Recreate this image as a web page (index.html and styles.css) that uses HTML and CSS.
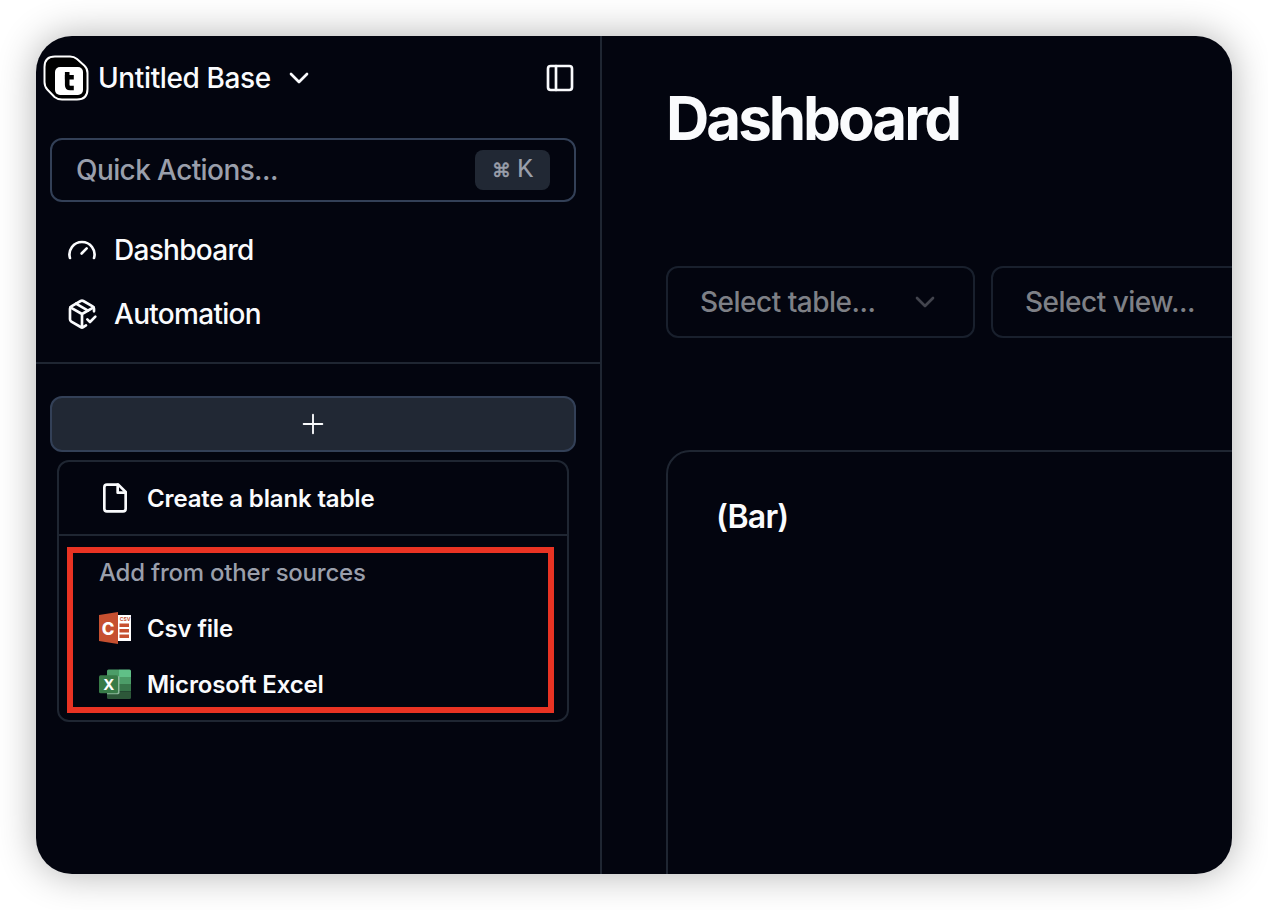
FILE: index.html
```html
<!DOCTYPE html>
<html lang="en">
<head>
<meta charset="utf-8">
<title>Untitled Base</title>
<link rel="stylesheet" href="styles.css">
</head>
<body>
<div class="window">
  <aside class="sidebar">
    <header class="base-header">
      <svg class="logo" viewBox="0 0 46 46">
        <path d="M12 1.500H27Q31 1.500 34 4L41.500 10.700Q44.500 13.500 44.500 18V34Q44.500 44.500 34 44.500H19Q14.500 44.500 11.500 42L4.300 34.500Q1.500 31.500 1.500 27V12Q1.500 1.500 12 1.500Z" fill="#000" stroke="#fff" stroke-width="2"/>
        <rect x="12" y="12" width="28" height="28" rx="5" fill="#fff"/>
        <path d="M24.200 17V30Q24.200 33 27.200 33H30.800M21.800 22.300H30.800" fill="none" stroke="#000" stroke-width="4.600"/>
      </svg>
      <span class="base-name">Untitled Base</span>
      <svg class="icon chevron" viewBox="0 0 24 24"><path d="m6 9 6 6 6-6"/></svg>
      <svg class="icon panel" viewBox="0 0 24 24"><rect x="3" y="3" width="18" height="18" rx="2"/><path d="M9 3v18"/></svg>
    </header>
    <button class="quick"><span class="t-quick">Quick Actions...</span><kbd><span class="cmd">⌘</span><span>K</span></kbd></button>
    <nav class="nav">
      <a class="nav-item"><svg class="icon" viewBox="0 0 24 24"><path d="m11.700 14.600 3.800-3.800"/><path d="M2.970 18a9.400 9.400 0 1 1 18.060 0"/></svg><span class="t-nav">Dashboard</span></a>
      <a class="nav-item"><svg class="icon" viewBox="0 0 24 24"><path d="m16 16 2 2 4-4"/><path d="M21 10V8a2 2 0 0 0-1-1.730l-7-4a2 2 0 0 0-2 0l-7 4A2 2 0 0 0 3 8v8a2 2 0 0 0 1 1.730l7 4a2 2 0 0 0 2 0l2-1.140"/><path d="m7.500 4.270 9 5.150"/><path d="M3.290 7 12 12l8.710-5M12 22V12"/></svg><span class="t-nav">Automation</span></a>
    </nav>
    <div class="tables">
      <button class="add"><svg class="icon" viewBox="0 0 24 24"><path d="M5 12h14M12 5v14"/></svg></button>
      <div class="menu">
        <div class="menu-item blank">
          <svg class="icon" viewBox="0 0 24 24"><path d="M14.500 2H6a2 2 0 0 0-2 2v16a2 2 0 0 0 2 2h12a2 2 0 0 0 2-2V7.500L14.500 2z"/><path d="M14 2v6h6"/></svg>
          <span class="item-text">Create a blank table</span>
        </div>
        <div class="sources">
          <div class="menu-label">Add from other sources</div>
          <div class="menu-item">
            <svg class="file-icon" viewBox="0 0 32 32">
              <rect x="17" y="3" width="15" height="26" fill="#fff"/>
              <path d="M0 3 19 0V32L0 29Z" fill="#c65030"/>
              <path d="M20.500 11.500H30V15H20.500ZM20.500 17H30V20.500H20.500ZM20.500 22.500H30V26H20.500Z" fill="#c65030"/>
              <text x="20.700" y="8.900" class="csv-mini">CSV</text>
              <text x="2.800" y="23" class="csv-letter">C</text>
            </svg>
            <span class="item-text">Csv file</span>
          </div>
          <div class="menu-item">
            <svg class="file-icon" viewBox="0 0 32 32">
              <path d="M8 3Q8 1.500 9.500 1.500H20V9H8Z" fill="#4c9d68"/>
              <path d="M20 1.500H30.500Q32 1.500 32 3V9H20Z" fill="#60c087"/>
              <path d="M8 9H20V16H8Z" fill="#37764a"/>
              <path d="M20 9H32V16H20Z" fill="#4c9d68"/>
              <path d="M8 16H20V24H8Z" fill="#2d5739"/>
              <path d="M20 16H32V23.500H20Z" fill="#37764a"/>
              <path d="M8 23.500H32V29.500Q32 31 30.500 31H9.500Q8 31 8 29.500Z" fill="#2d5739"/>
              <path d="M8 8H19Q20.500 8 20.500 9.500V24.500Q20.500 26.300 19 26.300H8Z" fill="#8bb79a"/>
              <rect x="0" y="7.300" width="19" height="18" rx="1.500" fill="#387b48"/>
              <text x="4.200" y="21.700" class="xls-letter">X</text>
            </svg>
            <span class="item-text">Microsoft Excel</span>
          </div>
        </div>
        <div class="highlight"></div>
      </div>
    </div>
  </aside>
  <main class="main">
    <h1>Dashboard</h1>
    <div class="selects">
      <div class="select"><span>Select table...</span><svg class="icon" viewBox="0 0 24 24"><path d="m6 9 6 6 6-6"/></svg></div>
      <div class="select"><span>Select view...</span><svg class="icon" viewBox="0 0 24 24"><path d="m6 9 6 6 6-6"/></svg></div>
    </div>
    <section class="card"><h2>(Bar)</h2></section>
  </main>
</div>
</body>
</html>
```
FILE: styles.css
```css
* { box-sizing: border-box; }
body {
  margin: 0;
  height: 910px;
  padding: 36px;
  overflow: hidden;
  background: #fff;
  color: #fafbfd;
  font-family: Inter, "Liberation Sans", sans-serif;
  font-size: 28px;
  font-weight: 450;
  line-height: 40px;
}
.window {
  display: flex;
  width: 1196px;
  height: 838px;
  border-radius: 36px;
  overflow: hidden;
  background: #03050f;
  box-shadow: 0 0 38px rgba(0, 0, 0, .31);
}
button { font: inherit; color: inherit; padding: 0; }
span, .menu-label, h1, h2 { white-space: nowrap; }
.icon {
  flex: none;
  width: 32px;
  height: 32px;
  fill: none;
  stroke: currentColor;
  stroke-width: 2;
  stroke-linecap: round;
  stroke-linejoin: round;
}
.sidebar {
  flex: none;
  width: 566px;
  border-right: 2px solid #1f2632;
}
.base-header {
  display: flex;
  align-items: center;
  height: 84px;
  padding: 0 24px 0 7px;
}
.logo { flex: none; width: 46px; height: 46px; margin-right: 9px; }
.base-name { width: 172px; letter-spacing: -.38px; }
.chevron { margin-left: 13px; }
.panel { margin-left: auto; }
.quick {
  display: flex;
  align-items: center;
  justify-content: space-between;
  width: 526px;
  height: 64px;
  margin: 18px 0 0 14px;
  padding: 0 24px;
  border: 2px solid #334057;
  border-radius: 12px;
  background: none;
  color: #9a9fab;
}
.t-quick { letter-spacing: -.6px; }
.t-nav { letter-spacing: -.7px; }
kbd {
  display: flex;
  align-items: center;
  justify-content: center;
  gap: 6px;
  width: 75px;
  height: 40px;
  border-radius: 8px;
  background: #212834;
  font: 27px/34px "Liberation Mono", monospace;
}
.cmd { font: 19px/30px "DejaVu Sans", sans-serif; -webkit-text-stroke: .5px currentColor; }
.nav {
  display: grid;
  gap: 8px;
  margin-top: 20px;
  padding: 0 14px 20px;
  border-bottom: 2px solid #1f2632;
}
.nav-item { display: flex; align-items: center; gap: 16px; height: 56px; padding-left: 16px; }
.tables { padding: 32px 14px 0; }
.add {
  display: grid;
  place-items: center;
  width: 526px;
  height: 56px;
  border: 2px solid #334057;
  border-radius: 12px;
  background: #212834;
}
.add .icon { stroke-width: 1.4; }
.menu {
  position: relative;
  width: 512px;
  height: 262px;
  margin: 8px 0 0 7px;
  border: 2px solid #1f2632;
  border-radius: 12px;
  font-size: 24px;
  font-weight: 600;
}
.menu-item { display: flex; align-items: center; gap: 16px; height: 56px; padding-left: 40px; }
.menu-item.blank { height: 74px; border-bottom: 2px solid #1f2632; }
.item-text { padding-top: 2px; letter-spacing: -.15px; }
.sources { padding-top: 8px; }
.menu-label { height: 56px; padding-left: 40px; line-height: 58px; font-weight: 450; letter-spacing: -.22px; color: #9a9fab; }
.file-icon { flex: none; width: 32px; height: 32px; }
.csv-mini { font: 700 5px Inter, sans-serif; fill: #c65030; }
.csv-letter { font: 800 17px Inter, sans-serif; fill: #fff; }
.xls-letter { font: 700 15px Inter, sans-serif; fill: #fff; }
.highlight {
  position: absolute;
  left: 7.500px;
  top: 84.500px;
  width: 487.500px;
  height: 166.500px;
  border: 6px solid #e93323;
}
.main { flex: none; width: 630px; padding: 46px 0 0 64px; }
h1 { margin: 0; font-size: 60px; line-height: 72px; font-weight: 700; letter-spacing: -3px; }
.selects { display: flex; gap: 16px; margin-top: 112px; }
.select {
  flex: none;
  display: flex;
  align-items: center;
  justify-content: space-between;
  width: 309px;
  height: 72px;
  padding: 0 32px;
  border: 2px solid #19202d;
  border-radius: 12px;
  color: #7e8086;
  letter-spacing: -.5px;
}
.select .icon { color: #42444d; }
.card {
  width: 700px;
  height: 500px;
  margin-top: 112px;
  padding: 45px 48px;
  border: 2px solid #1f2632;
  border-radius: 24px;
}
h2 { margin: 0; font-size: 32px; line-height: 40px; font-weight: 600; letter-spacing: -.8px; }
```
